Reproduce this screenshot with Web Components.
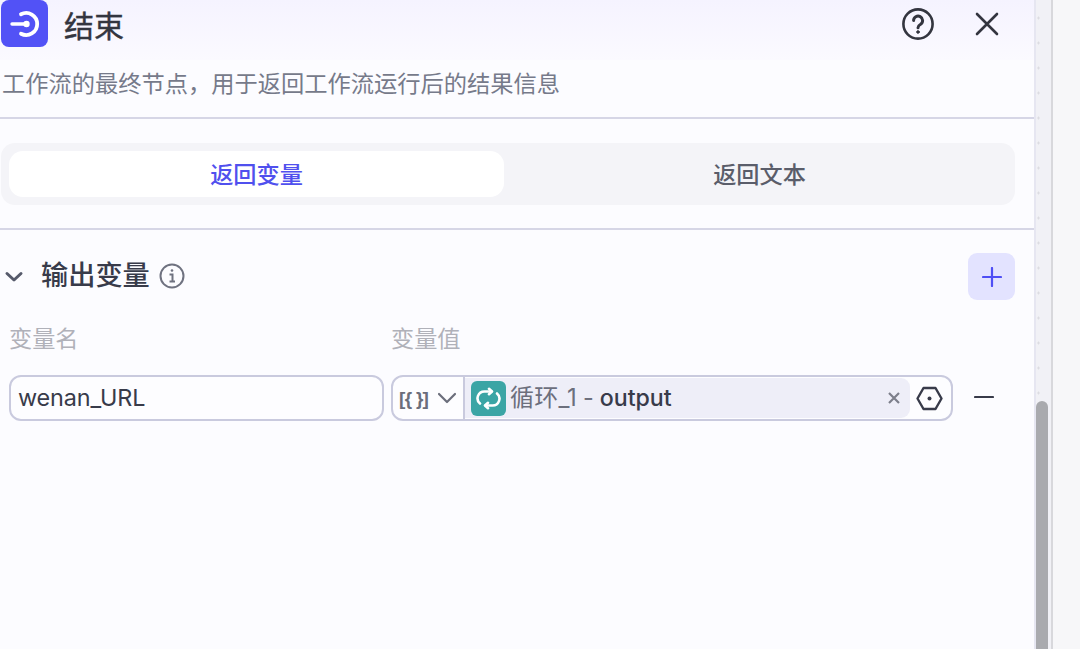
<!DOCTYPE html>
<html lang="zh"><head><meta charset="utf-8">
<style>
html,body{margin:0;height:649px;overflow:hidden;background:#f7f7f9}
body{font-family:Inter,"Noto Sans CJK SC",sans-serif;display:flex}
</style></head><body>
<end-panel></end-panel>
<canvas-strip></canvas-strip>
<template id="t-panel">
<style>
:host{display:block;box-sizing:border-box;width:1036px;height:649px;background:#fcfcff;border-right:2px solid #e6e6f1;overflow:hidden;flex:none;color:#383b4a}
.head{height:60px;background:linear-gradient(#f5f3ff,#fbfaff);display:flex;align-items:center;padding:0 34px 0 1px}
.logo{width:47px;height:47px;border-radius:8px;background:#5252f6;display:flex;margin-top:-13px;flex:none}
h1{font:400 30px/1 Inter,"Noto Sans CJK SC",sans-serif;margin:-9px 0 0 16px;flex:1;color:#33353f;-webkit-text-stroke:.4px #33353f}
.tool{display:flex;margin-top:-12px}
.help{margin-right:39px}
.sub{height:57px;box-sizing:border-box;padding:10px 0 0 2px;font-size:23.25px;line-height:28px;color:#767a8a;white-space:nowrap}
hr{border:0;height:2px;background:#d6d6e6;margin:0}
.tabs-wrap{height:109px;box-sizing:border-box;padding:24px 19px 24px 1px}
.sec{display:flex;align-items:center;height:47px;margin-top:23px;padding-right:19px}
.chev{margin:0 17px 0 4px;flex:none}
h2{font:500 27.2px/1 Inter,"Noto Sans CJK SC",sans-serif;margin:-2px 9px 0 0;color:#383b4a}
.info{margin-top:-2px}
.add{margin-left:auto;width:47px;height:47px;border-radius:9px;background:#e3e3ff;display:flex;align-items:center;justify-content:center}
.grid{display:grid;grid-template-columns:375px 562px 1fr;column-gap:7px;padding:0 0 0 9px;margin-top:21px}
.lbl{font-size:23.2px;line-height:36px;color:#b0b1b9;height:54px;}
.minus{display:flex;align-items:center;justify-content:center;width:48px;margin-top:-2px}
</style>
<div class="head">
<div class="logo"><svg width="47" height="47" viewBox="0 0 47 47" fill="none" stroke="#fff" stroke-linecap="round"><path d="M11 24H25" stroke-width="3.4"/><circle cx="25.5" cy="24" r="3.2" fill="#fff" stroke="none"/><path d="M20 14.3A11 11 0 1 1 20 33.7" stroke-width="3.8"/></svg></div>
<h1>结束</h1>
<div class="tool help"><svg width="34" height="34" viewBox="0 0 34 34" fill="none" stroke="#33353f" stroke-width="2.6" stroke-linecap="round"><circle cx="17" cy="17" r="14.6"/><path d="M12.6 13.6a4.5 4.5 0 1 1 7 3.7c-1.6 1-2.6 1.7-2.6 3.4" stroke-width="3"/><circle cx="17" cy="25" r="1.3" fill="#33353f" stroke-width="1"/></svg></div>
<div class="tool"><svg width="26" height="26" viewBox="0 0 26 26" fill="none" stroke="#33353f" stroke-width="2.6" stroke-linecap="round"><path d="M3 3L23 23M23 3L3 23"/></svg></div>
</div>
<div class="sub">工作流的最终节点，用于返回工作流运行后的结果信息</div>
<hr>
<div class="tabs-wrap"><tab-bar><span slot="a">返回变量</span><span slot="b">返回文本</span></tab-bar></div>
<hr>
<div class="sec">
<svg class="chev" width="20" height="14" viewBox="0 0 20 14" fill="none" stroke="#565a6b" stroke-width="3" stroke-linecap="round" stroke-linejoin="round"><path d="M3 3.5L10 10L17 3.5"/></svg>
<h2>输出变量</h2>
<svg class="info" width="26" height="26" viewBox="0 0 26 26" fill="none" stroke="#6f7280" stroke-width="2"><circle cx="13" cy="13" r="11.5"/><path d="M10.5 11.5H13.5V18.5M10.5 18.5H16"/><circle cx="13" cy="7.5" r="1.3" fill="#6f7280" stroke="none"/></svg>
<div class="add"><svg width="20" height="20" viewBox="0 0 20 20" stroke="#4f4ff5" stroke-width="2.2" stroke-linecap="round"><path d="M10 1V19M1 10H19"/></svg></div>
</div>
<div class="grid">
<div class="lbl">变量名</div><div class="lbl">变量值</div><div></div>
<name-field>wenan_URL</name-field>
<value-field>
<span slot="label">循环_1</span><span slot="name">output</span>
</value-field>
<div class="minus"><svg width="20" height="4" viewBox="0 0 20 4"><path d="M1 2H19" stroke="#383b4a" stroke-width="2.2" stroke-linecap="round"/></svg></div>
</div>
</template>
<template id="t-tabs">
<style>
:host{display:flex;height:62px;box-sizing:border-box;padding:8px 0 8px 8px;background:#f4f4f8;border-radius:14px}
div{flex:1;display:flex;align-items:center;justify-content:center;font-size:23.2px;font-weight:500;border-radius:14px;color:#5a5d6a;padding-bottom:2px;box-sizing:border-box}
.on{background:#fff;color:#5050ee;flex:none;width:495px}
</style>
<div class="on"><slot name="a"></slot></div><div><slot name="b"></slot></div>
</template>
<template id="t-name">
<style>
:host{display:flex;align-items:center;box-sizing:border-box;height:46px;border:2px solid #c9cade;border-radius:12px;padding:0 7px 1px;font-size:23.4px;letter-spacing:-.15px;color:#383b4a;background:#fdfdff}
</style><slot></slot>
</template>
<template id="t-value">
<style>
:host{display:flex;align-items:center;box-sizing:border-box;height:46px;border:2px solid #c9cade;border-radius:12px;background:#fdfdff;overflow:hidden;font-size:23.4px;color:#6c6f7d}
.type{display:flex;align-items:center;flex:none;width:72px;height:100%;border-right:2px solid #c9cade;box-sizing:border-box;padding-left:6px}
.bk{font:700 19px/1 "Liberation Sans",sans-serif;color:#6b6e7b;letter-spacing:-.7px;white-space:nowrap;width:38px;flex:none}
.chip{flex:1;display:flex;align-items:center;height:40px;background:#eeeef8;border-radius:0 9px 9px 0;padding-left:6px;min-width:0}
.ic{width:35px;height:35px;border-radius:6px;background:#3ba5a5;display:flex;align-items:center;justify-content:center;flex:none;margin-right:4px}
.txt{display:flex;align-items:baseline;line-height:30px;margin-top:-1px}
.lb{font-size:24px;letter-spacing:.2px}
.nm{color:#383b4a;font-weight:500;font-size:23.2px}
.sep{margin:0 6px}
.x{margin-left:auto;margin-right:10px}
.hex{margin:0 8px 0 6px;flex:none}
</style>
<div class="type"><span class="bk">[{ }]</span><svg width="20" height="12" viewBox="0 0 20 12" fill="none" stroke="#6b6e7b" stroke-width="2.2" stroke-linecap="round" stroke-linejoin="round"><path d="M2 2L10 10L18 2"/></svg></div>
<div class="chip"><span class="ic"><svg width="25" height="23" viewBox="0 0 25 23" fill="none" stroke="#fff" stroke-width="2.6" stroke-linecap="round" stroke-linejoin="round"><path d="M4 16.5A6.8 6.8 0 0 1 8.5 4.5H15.5"/><path d="M13 1.8L16 4.5L13 7.2"/><path d="M21 6.5A6.8 6.8 0 0 1 16.5 18.5H9.5"/><path d="M12 15.8L9 18.5L12 21.2"/></svg></span><span class="txt"><span class="lb"><slot name="label"></slot></span><span class="sep">-</span><span class="nm"><slot name="name"></slot></span></span>
<svg class="x" width="12" height="12" viewBox="0 0 12 12" stroke="#7d7f8b" stroke-width="2.2"><path d="M1 1L11 11M11 1L1 11"/></svg></div>
<svg class="hex" width="27" height="25" viewBox="0 0 27 25" fill="none" stroke="#383b4a" stroke-width="2.4" stroke-linejoin="round"><path d="M7.5 2H19.5L25.5 12.5L19.5 23H7.5L1.5 12.5Z"/><circle cx="13.5" cy="12.5" r="2" fill="#383b4a" stroke="none"/></svg>
</template>
<template id="t-strip">
<style>
:host{display:block;box-sizing:border-box;width:17px;height:649px;background:#f1f1f6 radial-gradient(circle,#dcdce2 1px,transparent 1.2px) 0 5.5px/5px 25px repeat-y;border-right:2px solid #d8d8dc;padding:401px 3px 0 0;flex:none}
div{width:12px;height:260px;background:#a9aaae;border-radius:6px 6px 0 0}
</style><div></div>
</template>
<script>
const reg=(n,t)=>customElements.define(n,class extends HTMLElement{constructor(){super();this.attachShadow({mode:"open"}).appendChild(document.getElementById(t).content.cloneNode(true))}});
reg("tab-bar","t-tabs");reg("name-field","t-name");reg("value-field","t-value");reg("canvas-strip","t-strip");reg("end-panel","t-panel");
</script>
</body></html>
